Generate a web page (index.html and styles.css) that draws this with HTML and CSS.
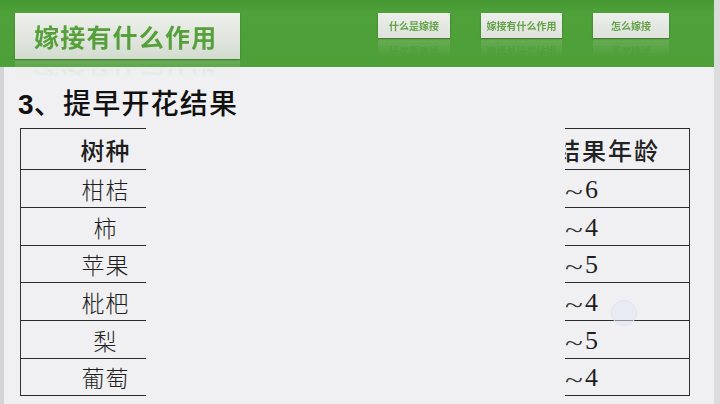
FILE: index.html
```html
<!DOCTYPE html>
<html lang="zh">
<head>
<meta charset="utf-8">
<link rel="stylesheet" href="styles.css">
</head>
<body>
<div class="slide">
  <header class="band">
    <div class="title-box">嫁接有什么作用</div>
    <nav class="nav">
      <div class="btn b1">什么是嫁接</div>
      <div class="btn b2">嫁接有什么作用</div>
      <div class="btn b3">怎么嫁接</div>
    </nav>
  </header>
  <main class="content">
    <h1 class="heading"><span class="num">3</span>、提早开花结果</h1>
    <div class="table">
      <div class="row head">
        <div class="cell left">树种</div>
        <div class="gap"></div>
        <div class="cell right"><span class="clip-h">结果年龄</span></div>
      </div>
      <div class="row r38"><div class="cell left">柑桔</div><div class="gap"></div><div class="cell right num-cell"><span class="t">~</span>6</div></div>
      <div class="row r38"><div class="cell left">柿</div><div class="gap"></div><div class="cell right num-cell"><span class="t">~</span>4</div></div>
      <div class="row r37"><div class="cell left">苹果</div><div class="gap"></div><div class="cell right num-cell"><span class="t">~</span>5</div></div>
      <div class="row r38"><div class="cell left">枇杷</div><div class="gap"></div><div class="cell right num-cell"><span class="t">~</span>4</div></div>
      <div class="row r38"><div class="cell left">梨</div><div class="gap"></div><div class="cell right num-cell"><span class="t">~</span>5</div></div>
      <div class="row r37"><div class="cell left">葡萄</div><div class="gap"></div><div class="cell right num-cell"><span class="t">~</span>4</div></div>
    </div>
    <div class="cursor"></div>
  </main>
</div>
</body>
</html>
```
FILE: styles.css
```css
* { box-sizing: border-box; margin: 0; padding: 0; }
html, body { width: 720px; height: 404px; overflow: hidden; }
body { background: #f0f0f2; font-family: "Noto Sans CJK SC", "Liberation Sans", sans-serif; }
.slide {
  width: 720px; height: 404px; display: flex; flex-direction: column;
  position: relative;
  border-left: 4px solid #d4d4d6;
  border-right: 6px solid #dcdcde;
  background: #f0f0f2;
}
.band {
  height: 67px; flex: none;
  background: linear-gradient(#469832, #4fa23a 20%, #4d9f37);
  display: flex; align-items: flex-start;
  padding: 13px 0 0 15px;
  margin-left: -4px; margin-right: 0;
}
.title-box {
  width: 225px; height: 46px;
  background: linear-gradient(#eef0ec, #dfe4dc 60%, #d3dbcf);
  color: #55a03a; font-weight: 700; font-size: 25px; letter-spacing: 1.2px;
  display: flex; align-items: center; padding-left: 19px;
  box-shadow: 0 1px 2px rgba(0,0,0,0.25);
  -webkit-box-reflect: below 1px linear-gradient(transparent 62%, rgba(255,255,255,0.22));
}
.nav { display: flex; gap: 31px; margin-left: 138px; }
.btn {
  height: 25px; display: flex; align-items: center; justify-content: center;
  background: linear-gradient(#eceeea, #dde2da);
  color: #64a24a; font-size: 10px; font-weight: 700;
  box-shadow: 0 1px 2px rgba(0,0,0,0.3);
  -webkit-box-reflect: below 1px linear-gradient(transparent 30%, rgba(255,255,255,0.18));
}
.b1 { width: 72px; }
.b2 { width: 81px; }
.b3 { width: 76px; }
.content { flex: 1; position: relative; padding: 17px 0 0 14px; }
.heading {
  font-size: 28px; line-height: 36px; font-weight: 500; color: #111;
  letter-spacing: 1.2px; height: 44px;
}
.heading .num { font-family: "Liberation Sans", sans-serif; font-weight: 700; margin-right: -1px; }
.table { margin-left: 2px; width: 670px; }
.row { display: flex; color: #222; font-size: 23px; }
.cell { display: flex; align-items: center; border-bottom: 1px solid #2a2a2a; height: 100%; }
.left {
  width: 126px; border-left: 1px solid #333; justify-content: center;
  padding-left: 44px; font-weight: 300; color: #1e1e1e; letter-spacing: 1px; white-space: nowrap;
}
.gap { width: 419px; }
.right { width: 125px; border-right: 1px solid #333; overflow: hidden; white-space: nowrap; }
.head { height: 42px; }
.head .cell { border-top: 1px solid #2a2a2a; font-weight: 500; }
.head .left { font-size: 24px; }
.clip-h { margin-left: -9px; font-size: 24px; letter-spacing: 2px; }
.r38 { height: 38px; }
.r37 { height: 37px; }
.num-cell { font-family: "Liberation Serif", serif; font-size: 26px; font-weight: 400; padding-top: 2px; color: #1e1e1e; }
.num-cell .t { display: inline-block; transform: scaleX(1.5) translateY(2px); transform-origin: left; margin-right: 8px; font-size: 22px; color: #333; }
.cursor {
  position: absolute; left: 607px; top: 233px; width: 26px; height: 26px;
  border-radius: 50%; border: 1.5px solid #dfe3ee; background: rgba(225,230,245,0.5);
}
```
